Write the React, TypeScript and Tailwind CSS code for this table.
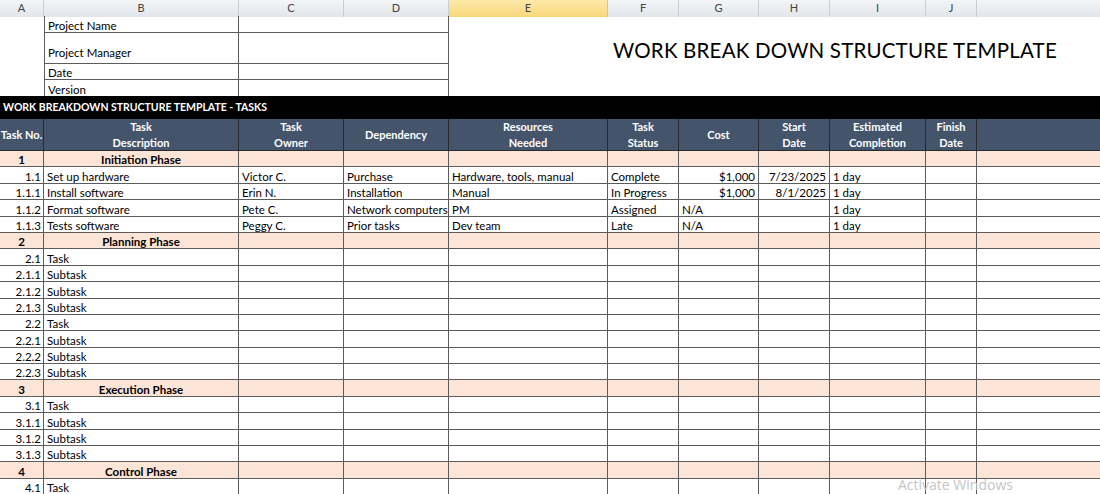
import React from "react";

type Phase = { kind: "phase"; no: string; name: string };
type Task = {
  kind: "task";
  no: string;
  desc: string;
  owner?: string;
  dep?: string;
  res?: string;
  status?: string;
  cost?: string;
  start?: string;
  est?: string;
};
type Row = Phase | Task;

const GRID =
  "grid grid-cols-[44px_195px_105px_105px_159px_71px_80px_71px_96px_51px_123px]";

const COL_LETTERS = ["A", "B", "C", "D", "E", "F", "G", "H", "I", "J", ""];

const HEADERS = [
  ["Task No."],
  ["Task", "Description"],
  ["Task", "Owner"],
  ["Dependency"],
  ["Resources", "Needed"],
  ["Task", "Status"],
  ["Cost"],
  ["Start", "Date"],
  ["Estimated", "Completion"],
  ["Finish", "Date"],
  [],
];

const sub = (no: string): Task => ({ kind: "task", no, desc: "Subtask" });
const task = (no: string): Task => ({ kind: "task", no, desc: "Task" });

const ROWS: Row[] = [
  { kind: "phase", no: "1", name: "Initiation Phase" },
  {
    kind: "task",
    no: "1.1",
    desc: "Set up hardware",
    owner: "Victor C.",
    dep: "Purchase",
    res: "Hardware, tools, manual",
    status: "Complete",
    cost: "$1,000",
    start: "7/23/2025",
    est: "1 day",
  },
  {
    kind: "task",
    no: "1.1.1",
    desc: "Install software",
    owner: "Erin N.",
    dep: "Installation",
    res: "Manual",
    status: "In Progress",
    cost: "$1,000",
    start: "8/1/2025",
    est: "1 day",
  },
  {
    kind: "task",
    no: "1.1.2",
    desc: "Format software",
    owner: "Pete C.",
    dep: "Network computers",
    res: "PM",
    status: "Assigned",
    cost: "N/A",
    est: "1 day",
  },
  {
    kind: "task",
    no: "1.1.3",
    desc: "Tests software",
    owner: "Peggy C.",
    dep: "Prior tasks",
    res: "Dev team",
    status: "Late",
    cost: "N/A",
    est: "1 day",
  },
  { kind: "phase", no: "2", name: "Planning Phase" },
  task("2.1"),
  sub("2.1.1"),
  sub("2.1.2"),
  sub("2.1.3"),
  task("2.2"),
  sub("2.2.1"),
  sub("2.2.2"),
  sub("2.2.3"),
  { kind: "phase", no: "3", name: "Execution Phase" },
  task("3.1"),
  sub("3.1.1"),
  sub("3.1.2"),
  sub("3.1.3"),
  { kind: "phase", no: "4", name: "Control Phase" },
  task("4.1"),
];

const cellBase =
  "h-[16.4px] border-b border-r border-[#5c5c5c] flex items-end px-[3px] leading-[13px] whitespace-nowrap";

const TaskRow = ({ row }: { row: Task }) => {
  const costRight = row.cost?.startsWith("$");
  const cells: Array<[string | undefined, string]> = [
    [row.no, "justify-end"],
    [row.desc, "justify-start"],
    [row.owner, "justify-start"],
    [row.dep, "justify-start"],
    [row.res, "justify-start"],
    [row.status, "justify-start"],
    [row.cost, costRight ? "justify-end" : "justify-start"],
    [row.start, "justify-end"],
    [row.est, "justify-start"],
    ["", "justify-start"],
    ["", "justify-start"],
  ];
  return (
    <div className={`${GRID} bg-white`}>
      {cells.map(([text, align], i) => (
        <div
          key={i}
          className={`${cellBase} ${align} ${i === 10 ? "border-r-0" : ""} ${
            i === 0 ? "pr-[2px]" : ""
          }`}
        >
          {text}
        </div>
      ))}
    </div>
  );
};

const PhaseRow = ({ row }: { row: Phase }) => (
  <div className={`${GRID} bg-[#fce4d6]`}>
    <div className={`${cellBase} justify-center font-bold`}>{row.no}</div>
    <div className={`${cellBase} justify-center font-bold`}>{row.name}</div>
    {Array.from({ length: 9 }).map((_, i) => (
      <div key={i} className={`${cellBase} ${i === 8 ? "border-r-0" : ""}`} />
    ))}
  </div>
);

export default function App() {
  return (
    <div className="relative w-[1100px] h-[494px] overflow-hidden bg-white font-['Lato','Liberation_Sans',sans-serif] text-[11.5px] text-black">
      {/* Column letters */}
      <div className={`${GRID} h-[16px] border-b border-[#a9b0b8]`}>
        {COL_LETTERS.map((l, i) => (
          <div
            key={i}
            className={`flex items-center justify-center text-[11px] text-[#444] border-r ${
              l === "E"
                ? "bg-gradient-to-b from-[#fde9a9] to-[#f9d77a] border-[#e9c25a]"
                : "bg-gradient-to-b from-[#f3f5f7] to-[#e2e6ea] border-[#c9ced4]"
            } ${i === 10 ? "border-r-0" : ""}`}
          >
            {l}
          </div>
        ))}
      </div>

      {/* Project info block */}
      <div className={`${GRID} grid-rows-[17px_31px_16px_16px]`}>
        <div className="row-span-4" />
        <div className="border-l border-b border-r border-[#5c5c5c] px-[3px] flex items-end leading-[13px]">
          Project Name
        </div>
        <div className="col-span-2 border-b border-r border-[#5c5c5c]" />
        <div className="col-start-5 col-span-7 row-span-4 pl-[164px] pt-[22px] text-[20.5px] tracking-[0.2px] leading-[24px]">
          WORK BREAK DOWN STRUCTURE TEMPLATE
        </div>
        <div className="border-l border-b border-r border-[#5c5c5c] px-[3px] pb-[3px] flex items-end leading-[15px]">
          Project Manager
        </div>
        <div className="col-span-2 border-b border-r border-[#5c5c5c]" />
        <div className="border-l border-b border-r border-[#5c5c5c] px-[3px] flex items-end leading-[13px]">
          Date
        </div>
        <div className="col-span-2 border-b border-r border-[#5c5c5c]" />
        <div className="border-l border-r border-[#5c5c5c] px-[3px] flex items-end leading-[13px]">
          Version
        </div>
        <div className="col-span-2 border-r border-[#5c5c5c]" />
      </div>

      {/* Black title bar */}
      <div className="h-[23px] bg-black text-white font-bold text-[10.5px] flex items-center px-[3px]">
        WORK BREAKDOWN STRUCTURE TEMPLATE - TASKS
      </div>

      {/* Table header */}
      <div className={`${GRID} h-[32px] bg-[#44546a] text-white font-bold text-[11px]`}>
        {HEADERS.map((lines, i) => (
          <div
            key={i}
            className={`flex flex-col items-center justify-center leading-[15.5px] whitespace-nowrap border-b border-r border-[#2a2a2a] ${
              i === 10 ? "border-r-0" : ""
            }`}
          >
            {lines.map((t) => (
              <span key={t}>{t}</span>
            ))}
          </div>
        ))}
      </div>

      {/* Body */}
      {ROWS.map((row, i) =>
        row.kind === "phase" ? (
          <PhaseRow key={i} row={row} />
        ) : (
          <TaskRow key={i} row={row} />
        )
      )}

      <div className="absolute left-[898px] top-[474px] text-[14px] text-[#c6c6c6] font-['Open_Sans',sans-serif]">
        Activate Windows
      </div>
    </div>
  );
}
